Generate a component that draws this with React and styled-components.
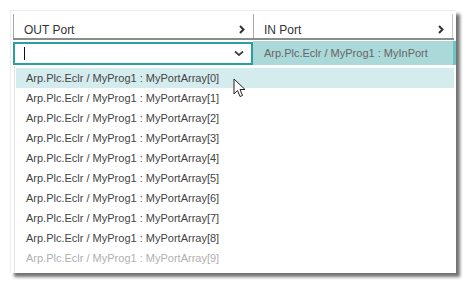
import React from "react";
import styled, { createGlobalStyle } from "styled-components";

const Global = createGlobalStyle`
  html, body { margin: 0; padding: 0; background: #ffffff; }
  body { font-family: "Liberation Sans", Arial, sans-serif; }
`;

const Page = styled.div`
  width: 468px;
  height: 284px;
  padding: 10px 0 0 10px;
  box-sizing: border-box;
`;

const Panel = styled.div`
  position: relative;
  width: 446px;
  height: 263px;
  box-sizing: border-box;
  background: #fff;
  border-top: 1px solid #ececec;
  border-left: 1px solid #ececec;
  box-shadow: 4px 4px 3px rgba(0, 0, 0, 0.55);
  padding: 3px 2px 0 2px;
  overflow: hidden;
  display: flex;
  flex-direction: column;
`;

const Header = styled.div`
  display: grid;
  grid-template-columns: 240px 200px;
  height: 26px;
  border-bottom: 2px solid #8c8c8c;
  box-sizing: border-box;
`;

const HeadCell = styled.div`
  display: flex;
  align-items: center;
  justify-content: space-between;
  padding: 7px 8px 0 10px;
  border-left: 1px solid #a8a8a8;
  border-right: ${(p) => (p.$last ? "1px solid #c8c8c8" : "none")};
  font-size: 12px;
  color: #333;
`;

const EditRow = styled.div`
  display: grid;
  grid-template-columns: 240px 203px;
  height: 23px;
  margin-top: 2px;
`;

const InputBox = styled.div`
  display: flex;
  align-items: center;
  justify-content: space-between;
  border: 2px solid #2a9fa0;
  box-sizing: border-box;
  height: 23px;
  padding: 0 7px 0 9px;
`;

const Caret = styled.span`
  width: 1px;
  height: 13px;
  background: #111;
`;

const ValueCell = styled.div`
  display: flex;
  align-items: center;
  background: #abd8d9;
  border-right: 3px solid #6cc6c6;
  padding-left: 11px;
  font-size: 11px;
  color: #666;
  margin-top: -1px;
`;

const List = styled.div`
  margin-left: 1px;
  margin-top: 1px;
  border-left: 1px solid #e2e2e2;
  flex: 1;
  padding: 2px 0 0 1px;
  display: flex;
  flex-direction: column;
`;

const Item = styled.div`
  height: 20px;
  flex: none;
  display: flex;
  align-items: center;
  padding-left: 10px;
  font-size: 11px;
  color: ${(p) => (p.$faded ? "#b0b0b0" : "#444")};
  background: ${(p) => (p.$active ? "#d4eced" : "transparent")};
`;

const Pointer = styled.svg`
  position: absolute;
  left: 222px;
  top: 67px;
`;

const Chevron = ({ dir = "right" }) =>
  dir === "right" ? (
    <svg width="6" height="9" viewBox="0 0 6 9">
      <path d="M1 1 L4.5 4.5 L1 8" fill="none" stroke="#333" strokeWidth="2" />
    </svg>
  ) : (
    <svg width="10" height="7" viewBox="0 0 10 7">
      <path d="M1 1.5 L5 5 L9 1.5" fill="none" stroke="#444" strokeWidth="1.8" />
    </svg>
  );

const items = Array.from({ length: 10 }, (_, i) => `Arp.Plc.Eclr / MyProg1 : MyPortArray[${i}]`);

export default function App() {
  return (
    <Page>
      <Global />
      <Panel>
        <Header>
          <HeadCell>
            OUT Port
            <Chevron />
          </HeadCell>
          <HeadCell $last>
            IN Port
            <Chevron />
          </HeadCell>
        </Header>
        <EditRow>
          <InputBox>
            <Caret />
            <Chevron dir="down" />
          </InputBox>
          <ValueCell>Arp.Plc.Eclr / MyProg1 : MyInPort</ValueCell>
        </EditRow>
        <List>
          {items.map((t, i) => (
            <Item key={t} $active={i === 0} $faded={i === 9}>
              {t}
            </Item>
          ))}
        </List>
        <Pointer width="14" height="20" viewBox="0 0 14 20">
          <path
            d="M1 1 L1 16 L4.5 12.5 L7 18.5 L9.5 17.5 L7 11.5 L12 11.5 Z"
            fill="#fff"
            stroke="#222"
            strokeWidth="1"
            strokeLinejoin="round"
          />
        </Pointer>
      </Panel>
    </Page>
  );
}
